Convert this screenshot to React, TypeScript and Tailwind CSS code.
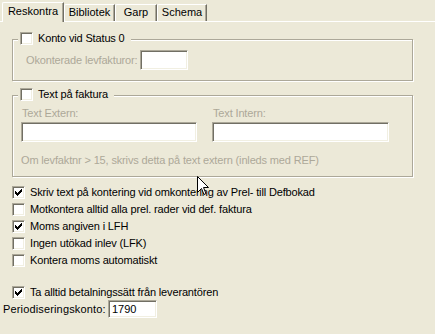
import React from 'react';

const sunken =
  'border border-t-[#ACA899] border-l-[#ACA899] border-b-white border-r-white shadow-[inset_1px_1px_0_#716F64,inset_-1px_-1px_0_#F1EFE2] bg-white';

const CheckMark = () => {
  const cols = [2, 3, 4, 3, 2, 1, 0];
  return (
    <svg width="13" height="13" className="absolute left-[-1px] top-[-1px]" shapeRendering="crispEdges">
      {cols.map((y, i) => (
        <rect key={i} x={3 + i} y={3 + y} width="1" height="3" fill="#000" />
      ))}
    </svg>
  );
};

const CheckBox = ({ checked = false }: { checked?: boolean }) => (
  <div className={`relative w-[13px] h-[13px] shrink-0 ${sunken}`}>{checked && <CheckMark />}</div>
);

const Tab = ({ label, width, active }: { label: string; width: string; active?: boolean }) => (
  <div
    className={`${width} ${
      active ? 'h-[20px] -mb-px z-10 pb-[3px]' : 'h-[17px] pb-[1px]'
    } flex items-center justify-center bg-[#ECE9D8] border-l border-t border-r border-l-white border-t-white border-r-[#716F64] rounded-tl-[2px] shadow-[inset_-1px_0_0_#ACA899]`}
  >
    {label}
  </div>
);

const Legend = ({ label }: { label: string }) => (
  <div className="flex items-center gap-[5px] w-fit ml-[5px] -mt-[8px] pl-[2px] pr-[6px] bg-[#ECE9D8]">
    <CheckBox />
    <span className="leading-[13px]">{label}</span>
  </div>
);

const Row = ({ label, checked }: { label: string; checked?: boolean }) => (
  <div className="flex items-center gap-[5px] h-[17px]">
    <CheckBox checked={checked} />
    <span>{label}</span>
  </div>
);

const Cursor = () => (
  <svg width="13" height="20" viewBox="0 0 13 20" className="absolute left-[197px] top-[176px]">
    <path d="M0.5 0.5 L0.5 16.5 L4.5 12.5 L7 18.5 L9 17.5 L6.5 11.5 L11.5 11.5 Z" fill="#fff" stroke="#000" strokeWidth="1" />
  </svg>
);

export default function App() {
  return (
    <div className="relative w-[435px] h-[334px] overflow-hidden bg-[#ECE9D8] text-black text-[11px] leading-[13px] tracking-[-0.15px] font-['Liberation_Sans',Arial,sans-serif]">
      <div className="flex items-end h-[21px] pl-[2px] tracking-normal">
        <Tab label="Reskontra" width="w-[62px]" active />
        <Tab label="Bibliotek" width="w-[51px]" />
        <Tab label="Garp" width="w-[42px]" />
        <Tab label="Schema" width="w-[50px]" />
      </div>
      <div className="border-t border-white">
        <div className="ml-[12px] mt-[17px] w-[401px] border border-[#ACA899] shadow-[inset_1px_1px_0_#fff,1px_1px_0_#fff]">
          <Legend label="Konto vid Status 0" />
          <div className="flex items-center pl-[13px] mt-[5px] pb-[10px]">
            <span className="w-[114px] text-[#ACA899]">Okonterade levfakturor:</span>
            <div className={`w-[48px] h-[20px] ${sunken}`} />
          </div>
        </div>

        <div className="ml-[12px] mt-[14px] w-[401px] border border-[#ACA899] shadow-[inset_1px_1px_0_#fff,1px_1px_0_#fff]">
          <Legend label="Text på faktura" />
          <div className="flex gap-[15px] pl-[8px] mt-[6px]">
            <div className="flex flex-col">
              <span className="pl-[1px] text-[#ACA899]">Text Extern:</span>
              <div className={`mt-[2px] w-[176px] h-[20px] ${sunken}`} />
            </div>
            <div className="flex flex-col">
              <span className="pl-[1px] text-[#ACA899]">Text Intern:</span>
              <div className={`mt-[2px] w-[177px] h-[20px] ${sunken}`} />
            </div>
          </div>
          <div className="pl-[8px] mt-[12px] pb-[9px] text-[#ACA899]">
            Om levfaktnr &gt; 15, skrivs detta på text extern (inleds med REF)
          </div>
        </div>

        <div className="pl-[12px] mt-[7px]">
          <Row label="Skriv text på kontering vid omkontering av Prel- till Defbokad" checked />
          <Row label="Motkontera alltid alla prel. rader vid def. faktura" />
          <Row label="Moms angiven i LFH" checked />
          <Row label="Ingen utökad inlev (LFK)" />
          <Row label="Kontera moms automatiskt" />
          <div className="flex items-center gap-[5px] h-[15px] mt-[16px]">
            <CheckBox checked />
            <span>Ta alltid betalningssätt från leverantören</span>
          </div>
        </div>
        <div className="flex items-center pl-[3px]">
          <span className="w-[105px] tracking-[0.15px]">Periodiseringskonto:</span>
          <div className={`w-[49px] h-[18px] flex items-center pl-[3px] tracking-normal ${sunken}`}>1790</div>
        </div>
      </div>
      <Cursor />
    </div>
  );
}
